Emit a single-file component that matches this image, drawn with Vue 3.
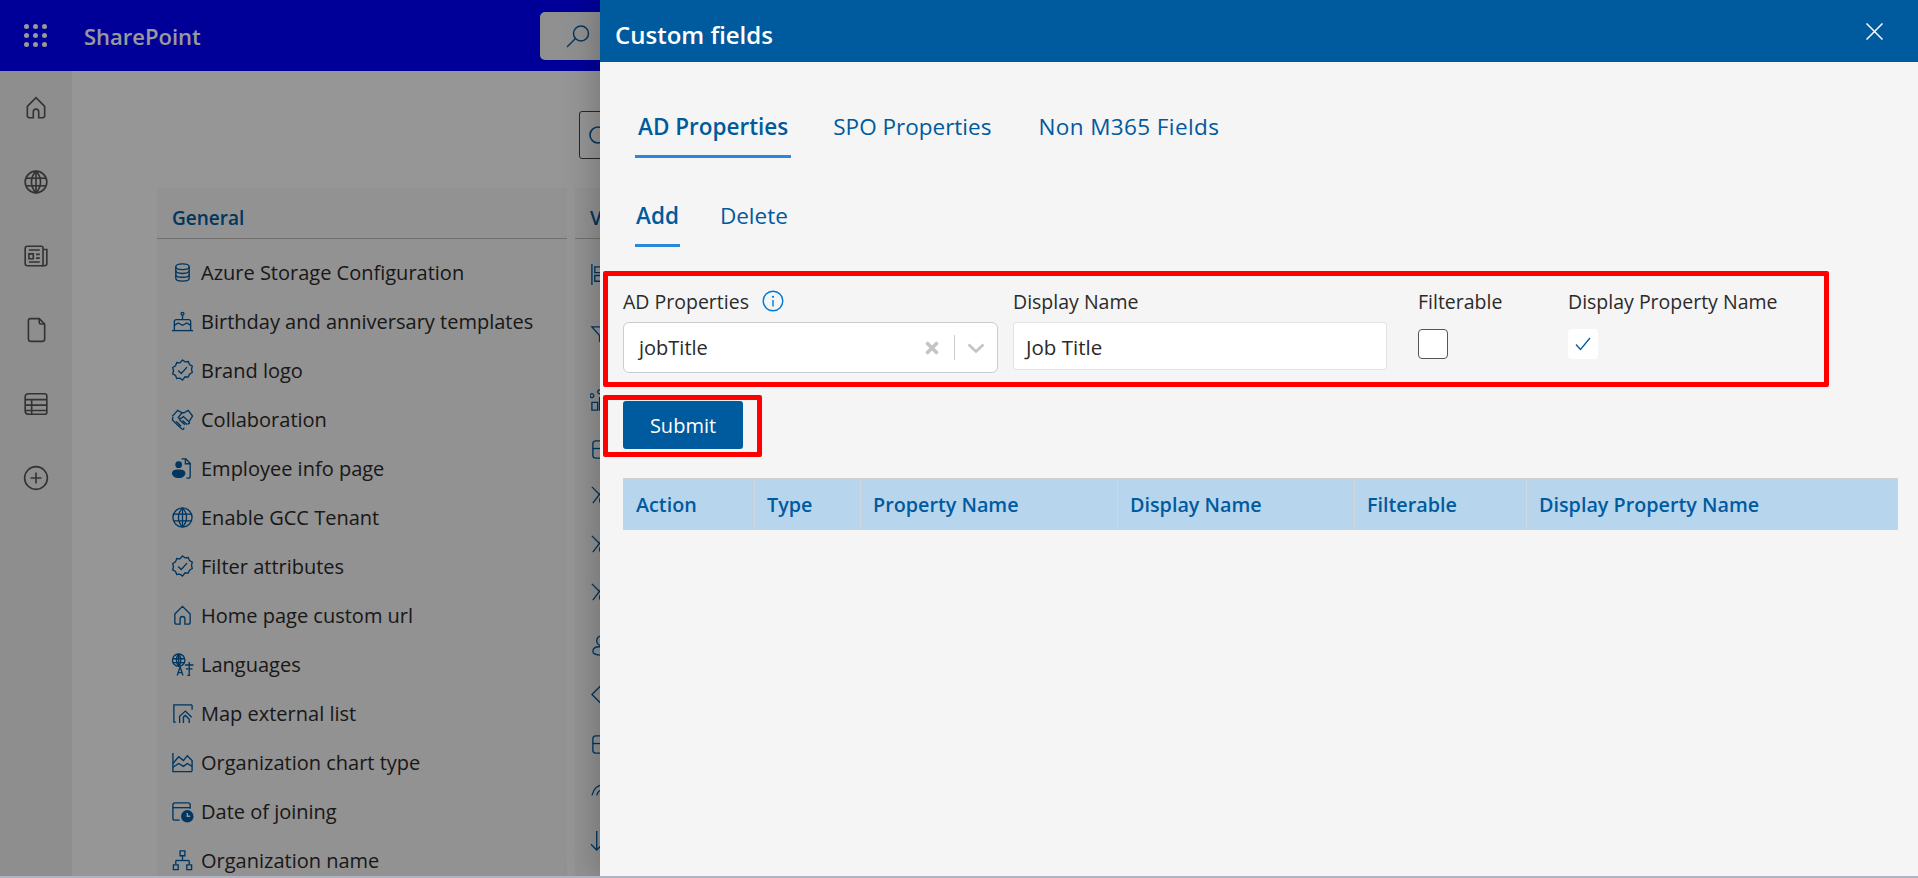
<script setup>
const STORAGE = ["M5 6c0-1.7 3.1-3 7-3s7 1.3 7 3-3.1 3-7 3-7-1.300-7-3z", "M5 6v12c0 1.700 3.100 3 7 3s7-1.300 7-3V6", "M5 10c0 1.700 3.100 3 7 3s7-1.300 7-3", "M5 14c0 1.700 3.100 3 7 3s7-1.300 7-3"];
const CAKE = ["M12 2.500a1.500 1.500 0 1 1 0 3 1.500 1.500 0 0 1 0-3z", "M12 6v4", "M3.500 21v-9a2 2 0 0 1 2-2h13a2 2 0 0 1 2 2v9", "M3.500 16l4-2.500 4.500 2.500 4.500-2.500 4 2.500", "M1 21.500h22"];
const BADGE = ["M12 1l2.700 2 3.300-.3 1.300 3.100 2.900 1.700-.8 3.300.8 3.300-2.900 1.700-1.300 3.100-3.300-.3L12 22l-2.700-2-3.300.3-1.300-3.100-2.900-1.700.8-3.300-.8-3.300 2.900-1.700L6 3.700l3.300.3z", "M7.500 12l3.200 3.200 6-6.700"];
const SHAKE = ["M1.500 8.500L7 2.500l4.500 2.500h2L18 2.500l4.500 6L19 14", "M11.500 5L7.500 10l2 1.500 3.500-2.500 6 5.500c.9 1-.3 2.400-1.500 1.600", "M2 9l-.5 3.500L6 17l5.500 5c1 .8 2.500-.5 1.700-1.500", "M5.500 14l5 5M8.500 12l6 5.500M12 13l5 4.500"];
const EMPLOYEE = ["M11 2h4.500L20 6.500V20a2 2 0 0 1-2 2h-2", "M15 2v5h5"];
const GLOBE = ["M12 2a10 10 0 1 1 0 20 10 10 0 0 1 0-20z", "M12 2c-5.600 6-5.600 14 0 20", "M12 2c5.600 6 5.600 14 0 20", "M2.800 8.500h18.400", "M2.800 15.500h18.400", "M12 2v20"];
const HOME = ["M4 10.500L12 2.500l8 8V19a2 2 0 0 1-2 2h-3.500v-5.500a2.500 2.500 0 0 0-5 0V21H6a2 2 0 0 1-2-2z"];
const LANG = ["M8 1a6.500 6.500 0 1 1 0 13 6.500 6.500 0 0 1 0-13z", "M8 1c-3 3.500-3 9.500 0 13", "M8 1c3 3.500 3 9.500 0 13", "M2 6h12M2 10h12M8 1v13", "M6.500 23.500l3-9 3 9M7.700 20.500h3.600", "M14.500 12.500h9M19 9.500v14M15.500 16.500h7M17 23.500h3"];
const MAP = ["M22 3H3v18h2", "M22 3v5", "M9 22v-7l6-5.500 6.500 6.500", "M13 22v-6.500l2-1.500 4 4v4"];
const CHART = ["M2 2v19.500h20", "M2 13l6-7 5 4 4-5 5 5v11", "M2 17l6-4 5 3 4-3 5 3"];
const DATE = ["M4 21a2 2 0 0 1-2-2V5a2 2 0 0 1 2-2h14a2 2 0 0 1 2 2v4", "M2 8h18", "M4 21h5"];
const ORG = ["M9.500 2h5v5h-5z", "M12 7v5", "M5 12h14", "M5 12v4M19 12v4", "M2.500 16.500h5v5h-5z", "M16.500 16.500h5v5h-5z"];

const generalItems = [
  { label: "Azure Storage Configuration", paths: STORAGE },
  { label: "Birthday and anniversary templates", paths: CAKE },
  { label: "Brand logo", paths: BADGE },
  { label: "Collaboration", paths: SHAKE },
  { label: "Employee info page", paths: EMPLOYEE, person: true },
  { label: "Enable GCC Tenant", paths: GLOBE },
  { label: "Filter attributes", paths: BADGE },
  { label: "Home page custom url", paths: HOME },
  { label: "Languages", paths: LANG },
  { label: "Map external list", paths: MAP },
  { label: "Organization chart type", paths: CHART },
  { label: "Date of joining", paths: DATE, clock: true },
  { label: "Organization name", paths: ORG },
];

const TABLE_SHAPE = ["M6 3h12a3 3 0 0 1 3 3v12a3 3 0 0 1-3 3H6a3 3 0 0 1-3-3V6a3 3 0 0 1 3-3z", "M3 11h18", "M12 11v10"];
const KNOT = ["M2 3l10 10", "M3 20L12 8c2-2.500 6-2 8 0", "M12 13a5 5 0 1 0 8 4"];

// second column sits almost entirely behind the panel, only the icons' left edge shows
const secondColumn = [
  { gap: 61, paths: ["M2 1v22", "M5 4h14v6H5z", "M5 13h18v6H5z"] },
  { gap: 65, paths: ["M2 3h20l-8 9v9l-4-3v-6z"] },
  { gap: 49, paths: ["M2 14h6v8H2z", "M10 9h6v13h-6z", "M4 7a2 2 0 1 1 0-.100", "M12 3a2 2 0 1 1 0-.100"] },
  { gap: 46, paths: TABLE_SHAPE },
  { gap: 49, paths: KNOT },
  { gap: 48, paths: KNOT },
  { gap: 53, paths: KNOT },
  { gap: 49, paths: ["M12 2a5 5 0 1 1 0 10 5 5 0 0 1 0-10z", "M12 13c-6 0-9 2-9 5s3 4 9 4 9-1 9-4-3-5-9-5z"] },
  { gap: 50, paths: ["M12 2L2 12l10 10 10-10z"] },
  { gap: 48, paths: TABLE_SHAPE },
  { gap: 48, paths: ["M2 15C4 7 9 4 14 4s9 3 10 8", "M7 15c1-4 4-6 7-6"] },
  { gap: 49, paths: ["M7 2v20", "M1 16l6 6 6-6"] },
];

const railIcons = [
  { id: "home", paths: HOME },
  { id: "globe", paths: GLOBE },
  { id: "news", paths: ["M4 3h13a1.500 1.500 0 0 1 1.500 1.500V20a1.500 1.500 0 0 1-1.500 1H4a2 2 0 0 1-2-2V5a2 2 0 0 1 2-2z", "M18.500 6H22v13a2 2 0 0 1-2 2h-3", "M5.500 10h4v4.500h-4z", "M12 10.500h3.500M12 14h3.500M5.500 17.500h10M5.500 6.500h10"] },
  { id: "doc", paths: ["M7 1.500h8l5 5V20a2.500 2.500 0 0 1-2.500 2.500h-10A2.500 2.500 0 0 1 5 20V3.500a2 2 0 0 1 2-2z", "M15 1.500v3.500a1.500 1.500 0 0 0 1.500 1.500H20"] },
  { id: "table", paths: ["M5 2.500h15a2 2 0 0 1 2 2v15a2 2 0 0 1-2 2H5a3 3 0 0 1-3-3V5a3 3 0 0 1 3-2.500z", "M2 8h20M2 13h20M2 18h20M8 8v13.500"] },
  { id: "add", paths: ["M12 1.500a10.500 10.500 0 1 1 0 21 10.500 10.500 0 0 1 0-21z", "M12 7v10M7 12h10"] },
];

const mainTabs = ["AD Properties", "SPO Properties", "Non M365 Fields"];
const subTabs = ["Add", "Delete"];
const columns = [
  { label: "Action", width: 131 },
  { label: "Type", width: 106 },
  { label: "Property Name", width: 257 },
  { label: "Display Name", width: 237 },
  { label: "Filterable", width: 172 },
  { label: "Display Property Name", width: 372 },
];
</script>

<template>
  <div class="page">
    <div class="stage">
      <header class="topbar">
        <div class="waffle">
          <span v-for="n in 9" :key="n" class="waffle-dot"></span>
        </div>
        <span class="brand">SharePoint</span>
        <div class="top-search">
          <svg class="top-search-icon" viewBox="0 0 24 24">
            <path d="M15 2a7.500 7.500 0 1 1 0 15 7.500 7.500 0 0 1 0-15z" />
            <path d="M9.500 14.500L1 23" />
          </svg>
        </div>
      </header>

      <div class="body">
        <nav class="rail">
          <svg v-for="icon in railIcons" :key="icon.id" class="rail-icon" viewBox="0 0 24 24">
            <path v-for="d in icon.paths" :key="d" :d="d" />
          </svg>
        </nav>

        <main class="main">
          <div class="main-inner">
            <div class="filter-box">
              <svg class="filter-icon" viewBox="0 0 24 24">
                <path d="M11 3a8 8 0 1 1 0 16 8 8 0 0 1 0-16z" />
              </svg>
            </div>
            <div class="cards">
              <section class="card">
                <h3 class="card-title">General</h3>
                <ul class="setting-list">
                  <li v-for="item in generalItems" :key="item.label" class="setting">
                    <svg class="setting-icon" viewBox="0 0 24 24">
                      <path v-for="d in item.paths" :key="d" :d="d" />
                      <g v-if="item.person" class="solid">
                        <circle cx="8" cy="8" r="3.500" />
                        <path d="M1 17c0-2.500 2-4 7-4s7 1.500 7 4-2.500 5-7 5-7-2.500-7-5z" />
                      </g>
                      <g v-if="item.clock">
                        <circle class="solid" cx="17" cy="17" r="6.500" />
                        <path class="clock-hand" d="M17 13.500V17h3" />
                      </g>
                    </svg>
                    <span>{{ item.label }}</span>
                  </li>
                </ul>
              </section>
              <section class="card card-second">
                <h3 class="card-title">V</h3>
                <div class="second-list">
                  <div v-for="(row, i) in secondColumn" :key="i" class="second-row" :style="{ height: row.gap + 'px' }">
                    <svg class="setting-icon" viewBox="0 0 24 24">
                      <path v-for="d in row.paths" :key="d" :d="d" />
                    </svg>
                  </div>
                </div>
              </section>
            </div>
          </div>
        </main>
      </div>

      <div class="dim"></div>

      <aside class="panel">
        <div class="panel-head">
          <span class="panel-title">Custom fields</span>
          <svg class="panel-close" viewBox="0 0 17 17">
            <path d="M.5.5l16 16M16.500.5l-16 16" />
          </svg>
        </div>

        <div class="tabs">
          <span v-for="(tab, i) in mainTabs" :key="tab" class="tab" :class="{ 'tab--on': i === 0 }">{{ tab }}</span>
        </div>
        <div class="tabs tabs-sub">
          <span v-for="(tab, i) in subTabs" :key="tab" class="tab" :class="{ 'tab--on': i === 0 }">{{ tab }}</span>
        </div>

        <div class="form-box">
          <div class="field field-select">
            <label class="field-label">
              AD Properties
              <svg class="info" viewBox="0 0 22 22">
                <circle cx="11" cy="11" r="9.800" />
                <path d="M11 10v6.500" />
                <circle class="info-dot" cx="11" cy="6.800" r="1.100" />
              </svg>
            </label>
            <div class="select">
              <span class="select-value">jobTitle</span>
              <svg class="select-clear" viewBox="0 0 14 14">
                <path d="M1.500 1.500l11 11M12.500 1.500l-11 11" />
              </svg>
              <span class="select-sep"></span>
              <svg class="select-chevron" viewBox="0 0 18 10">
                <path d="M1.500 1.500L9 8.500l7.500-7" />
              </svg>
            </div>
          </div>
          <div class="field field-name">
            <label class="field-label">Display Name</label>
            <div class="text-input">Job Title</div>
          </div>
          <div class="field field-filter">
            <label class="field-label">Filterable</label>
            <span class="check"></span>
          </div>
          <div class="field">
            <label class="field-label">Display Property Name</label>
            <span class="check check--on">
              <svg viewBox="0 0 16 14">
                <path d="M1 7.500L5.500 12.500 15 1" />
              </svg>
            </span>
          </div>
        </div>

        <div class="submit-box">
          <button class="submit" type="button">Submit</button>
        </div>

        <div class="table-head">
          <div v-for="col in columns" :key="col.label" class="th" :style="{ width: col.width + 'px' }">{{ col.label }}</div>
        </div>
      </aside>
    </div>
  </div>
</template>

<style>
html,
body {
  margin: 0;
  overflow: hidden;
}
</style>

<style scoped>
.page {
  width: 1918px;
  height: 878px;
  overflow: hidden;
  background: #aeb4c0;
  font-family: "Open Sans", "Liberation Sans", sans-serif;
  color: #2b2a29;
}
.stage {
  position: relative;
  height: 876px;
  overflow: hidden;
  background: #f7f7f7;
}

.topbar {
  display: flex;
  align-items: center;
  height: 71px;
  background: #0000ff;
}
.waffle {
  display: grid;
  grid-template-columns: repeat(3, 5px);
  gap: 4px;
  margin-left: 24px;
  width: 23px;
}
.waffle-dot {
  width: 5px;
  height: 5px;
  border-radius: 50%;
  background: #fff;
}
.brand {
  width: 118px;
  margin-left: 37px;
  font-size: 22px;
  font-weight: 600;
  color: #fff;
}
.top-search {
  display: flex;
  align-items: center;
  margin-left: 338px;
  width: 100px;
  height: 48px;
  border-radius: 5px;
  background: #f0f0f0;
}
.top-search-icon {
  width: 24px;
  height: 24px;
  margin-left: 26px;
  fill: none;
  stroke: #0a5a9c;
  stroke-width: 1.5;
}

.body {
  display: flex;
  height: 805px;
}
.rail {
  display: flex;
  flex-direction: column;
  flex: none;
  gap: 48px;
  align-items: center;
  box-sizing: border-box;
  width: 72px;
  padding-top: 24px;
  background: #ededed;
}
.rail-icon {
  width: 26px;
  height: 26px;
  fill: none;
  stroke: #555;
  stroke-width: 1.5;
}

.main {
  flex: 1;
  min-width: 0;
  padding: 9px 0 0 77px;
  background: #fafafa;
}
.main-inner {
  box-sizing: border-box;
  height: 100%;
  padding-top: 31px;
  background: #fbfbfb;
}
.filter-box {
  box-sizing: border-box;
  width: 100px;
  height: 48px;
  margin-left: 430px;
  padding: 12px 7px;
  border: 1px solid #444;
  border-radius: 3px;
}
.filter-icon {
  display: block;
  width: 24px;
  height: 24px;
  fill: none;
  stroke: #0a5a9c;
  stroke-width: 1.6;
}
.cards {
  display: flex;
  gap: 8px;
  margin: 29px 0 0 8px;
}
.card {
  flex: none;
  width: 410px;
  background: #f3f3f3;
}
.card-second {
  width: 300px;
}
.card-title {
  box-sizing: border-box;
  height: 51px;
  margin: 0;
  padding: 17px 0 0 15px;
  border-bottom: 1px solid #bbb;
  font-size: 19px;
  line-height: 26px;
  font-weight: 600;
  color: #005a9e;
}
.setting-list {
  margin: 9px 0 0;
  padding: 0;
  list-style: none;
}
.setting {
  display: flex;
  align-items: center;
  gap: 7px;
  height: 49px;
  padding-left: 14px;
  font-size: 20px;
}
.setting-icon {
  flex: none;
  width: 23px;
  height: 23px;
  fill: none;
  stroke: #005a9e;
  stroke-width: 1.4;
}
.solid {
  fill: #005a9e;
  stroke: none;
}
.clock-hand {
  stroke: #fff;
}
.second-list {
  margin-top: 24px;
  padding-left: 15px;
}

.dim {
  position: absolute;
  inset: 0;
  background: rgba(0, 0, 0, 0.4);
}

.panel {
  position: absolute;
  top: 0;
  right: 0;
  bottom: 0;
  width: 1318px;
  background: #f5f5f5;
  box-shadow: 0 0 34px rgba(0, 0, 0, 0.28);
}
.panel-head {
  display: flex;
  align-items: center;
  justify-content: space-between;
  height: 62px;
  padding: 6px 35px 0 15px;
  box-sizing: border-box;
  background: #005a9e;
}
.panel-title {
  font-size: 24px;
  font-weight: 600;
  color: #fff;
}
.panel-close {
  width: 17px;
  height: 17px;
  margin-top: -6px;
  fill: none;
  stroke: #fff;
  stroke-width: 1.5;
}

.tabs {
  display: flex;
  gap: 39px;
  margin: 47px 0 0 35px;
  font-size: 22.500px;
  color: #005a9e;
}
.tabs-sub {
  margin-top: 40px;
  gap: 39px;
}
.tab {
  padding: 2px 3px 12px;
  line-height: 32px;
  border-bottom: 3px solid transparent;
}
.tab:nth-child(3) {
  margin-left: 2px;
  letter-spacing: 0.4px;
}
.tabs-sub .tab {
  padding: 2px 1px 12px;
}
.tab--on {
  font-weight: 600;
  border-bottom-color: #2b88d8;
}

.form-box {
  display: flex;
  box-sizing: border-box;
  width: 1226px;
  height: 116px;
  margin: 24px 0 0 3px;
  padding: 14px 0 0 15px;
  border: 5px solid #f00;
  border-radius: 2px;
}
.field {
  display: flex;
  flex-direction: column;
}
.field-label {
  display: flex;
  align-items: center;
  gap: 13px;
  height: 22px;
  margin-bottom: 10px;
  font-size: 19.500px;
  white-space: nowrap;
}
.field-select {
  width: 375px;
  margin-right: 15px;
}
.field-name {
  width: 374px;
  margin-right: 31px;
}
.field-filter {
  width: 150px;
}
.info {
  flex: none;
  width: 22px;
  height: 22px;
  fill: none;
  stroke: #0078d4;
  stroke-width: 1.4;
}
.info-dot {
  fill: #0078d4;
  stroke: none;
}
.select {
  display: flex;
  align-items: center;
  box-sizing: border-box;
  height: 51px;
  padding: 0 12px 0 15px;
  border: 1px solid #ccc;
  border-radius: 6px;
  background: #fff;
}
.select-value {
  flex: 1;
  font-size: 20px;
}
.select-clear {
  width: 14px;
  height: 14px;
  fill: none;
  stroke: #c4c4c4;
  stroke-width: 3.600;
}
.select-sep {
  width: 1px;
  height: 25px;
  margin: 0 12px 0 15px;
  background: #ccc;
}
.select-chevron {
  width: 18px;
  height: 10px;
  fill: none;
  stroke: #c4c4c4;
  stroke-width: 2.6;
}
.text-input {
  box-sizing: border-box;
  height: 48px;
  padding: 1px 12px 0;
  border: 1px solid #e2e2e2;
  border-radius: 3px;
  background: #fff;
  font-size: 20.500px;
  line-height: 47px;
}
.check {
  box-sizing: border-box;
  width: 30px;
  height: 30px;
  margin-top: 7px;
  border: 1px solid #555;
  border-radius: 4px;
  background: #fff;
}
.check--on {
  display: flex;
  align-items: center;
  justify-content: center;
  border: 0;
}
.check--on svg {
  width: 16px;
  height: 14px;
  fill: none;
  stroke: #005a9e;
  stroke-width: 1.3;
}

.submit-box {
  box-sizing: border-box;
  width: 159px;
  height: 62px;
  margin: 8px 0 0 3px;
  padding: 1px 0 0 15px;
  border: 5px solid #f00;
  border-radius: 2px;
}
.submit {
  display: block;
  width: 120px;
  height: 48px;
  padding: 1px 0 0;
  border: 0;
  border-radius: 3px;
  background: #005a9e;
  color: #fff;
  font-family: inherit;
  font-size: 20px;
  font-weight: 400;
}

.table-head {
  display: flex;
  box-sizing: border-box;
  width: 1275px;
  height: 52px;
  margin: 21px 0 0 23px;
  border: 1px solid #d0d0d0;
  background: #b8d5ee;
}
.th {
  flex: none;
  box-sizing: border-box;
  padding-left: 12px;
  border-right: 1px solid #d0d8de;
  font-size: 19.750px;
  font-weight: 600;
  line-height: 52px;
  color: #005a9e;
}
.th:last-child {
  border-right: 0;
}
</style>
